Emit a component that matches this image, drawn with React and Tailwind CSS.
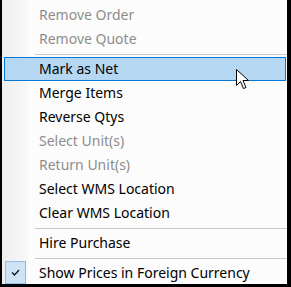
import React from "react";

const items = [
  { label: "Remove Order", disabled: true },
  { label: "Remove Quote", disabled: true },
  { sep: true },
  { label: "Mark as Net", hover: true },
  { label: "Merge Items" },
  { label: "Reverse Qtys" },
  { label: "Select Unit(s)", disabled: true },
  { label: "Return Unit(s)", disabled: true },
  { label: "Select WMS Location" },
  { label: "Clear WMS Location" },
  { sep: true },
  { label: "Hire Purchase" },
  { sep: true },
  { label: "Show Prices in Foreign Currency", checked: true },
];

const Cursor = () => (
  <svg width="14" height="22" viewBox="0 0 14 22" className="absolute left-[234px] top-[69px]">
    <path
      d="M0.5 0.5 L0.5 16.5 L4.5 12.5 L7.5 19.5 L10 18.5 L7 11.5 L12.5 11.5 Z"
      fill="#fff"
      stroke="#000"
      strokeWidth="1"
    />
  </svg>
);

export default function App() {
  return (
    <div className="w-[291px] h-[287px] bg-black pl-[2px] pr-[4px] pb-[3px]">
      <div
        className="relative h-full bg-[#fcfcfc] pt-[3px] text-[14px]"
        style={{ fontFamily: '"Segoe UI", "Noto Sans", sans-serif' }}
      >
        <div className="absolute left-0 top-0 bottom-0 w-[26px] bg-gradient-to-r from-[#eeeeee] to-[#f8f8f8]" />
        {items.map((it, i) =>
          it.sep ? (
            <div key={i} className="relative h-[6px] flex items-center pl-[33px]">
              <div className="h-px w-full bg-[#c8c8c8]" />
            </div>
          ) : (
            <div
              key={i}
              className={
                "relative h-[24px] flex items-center leading-none " +
                (it.hover
                  ? "ml-[2px] mr-px border border-[#0078d7] bg-[#b6d7f2] pl-[34px]"
                  : "pl-[37px]") +
                (it.disabled ? " text-[#8d8d8d]" : " text-black")
              }
            >
              {it.checked && (
                <div className="absolute left-[3px] top-0 w-[21px] h-[23px] border border-[#8cc0ef] bg-[#cde4f7] flex items-center justify-center">
                  <svg width="9" height="7" viewBox="0 0 9 7">
                    <path d="M1 3.5 L3.5 6 L8 1" fill="none" stroke="#1a1a1a" strokeWidth="1.4" />
                  </svg>
                </div>
              )}
              <span>{it.label}</span>
            </div>
          )
        )}
        <Cursor />
      </div>
    </div>
  );
}
